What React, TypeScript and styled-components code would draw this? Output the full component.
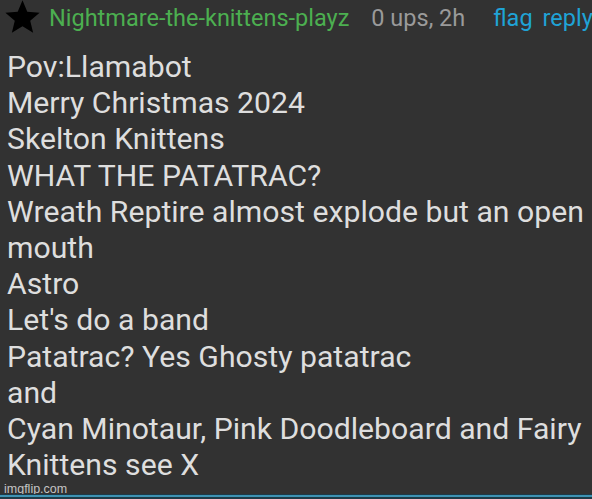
import React from "react";
import styled, { createGlobalStyle } from "styled-components";

const Global = createGlobalStyle`
  html, body { margin: 0; padding: 0; background: #323232; }
  body { width: 592px; height: 499px; overflow: hidden; }
`;

const Page = styled.div`
  position: relative;
  width: 592px;
  height: 499px;
  background: #323232;
  font-family: Roboto, "Liberation Sans", sans-serif;
  overflow: hidden;
  display: flex;
  flex-direction: column;
`;

const Header = styled.div`
  display: flex;
  align-items: center;
  height: 36px;
  padding-left: 4px;
  white-space: nowrap;
  font-size: 23.5px;
`;

const Star = styled.svg`
  width: 37px;
  height: 37px;
  margin-top: -4px;
  flex: none;
`;

const User = styled.span`
  color: #4caf50;
  margin-left: 8px;
`;

const Meta = styled.span`
  color: #9a9a9a;
  margin-left: 22px;
`;

const Link = styled.span<{ $gap: number }>`
  color: #1fa3d6;
  margin-left: ${(p) => p.$gap}px;
`;

const Body = styled.div`
  padding: 13px 0 0 7px;
  color: #dedede;
  font-size: 30.2px;
  line-height: 36.2px;
  white-space: pre;
`;

const Watermark = styled.span`
  position: absolute;
  left: 4px;
  bottom: 4px;
  font-family: "Liberation Sans", sans-serif;
  font-size: 12.5px;
  line-height: 12px;
  color: #c4c4c4;
`;

const BottomBar = styled.div`
  position: absolute;
  left: 0;
  right: 0;
  bottom: 0;
  height: 4px;
  background: #1e3b48;
  border-top: 1px solid #1e3a48;
  &::after {
    content: "";
    display: block;
    height: 2px;
    background: #3e93b3;
  }
`;

const lines = [
  "Pov:Llamabot",
  "Merry Christmas 2024",
  "Skelton Knittens",
  "WHAT THE PATATRAC?",
  "Wreath Reptire almost explode but an open",
  "mouth",
  "Astro",
  "Let's do a band",
  "Patatrac? Yes Ghosty patatrac",
  "and",
  "Cyan Minotaur, Pink Doodleboard and Fairy",
  "Knittens see X",
];

export default function App() {
  return (
    <Page>
      <Global />
      <Header>
        <Star viewBox="0 0 24 24">
          <path d="M12 1.5l3.1 7.4 8 .6-6.1 5.2 1.9 7.8L12 18.3l-6.9 4.2 1.9-7.8L.9 9.5l8-.6z" fill="#000" />
        </Star>
        <User>Nightmare-the-knittens-playz</User>
        <Meta>0 ups, 2h</Meta>
        <Link $gap={28}>flag</Link>
        <Link $gap={10}>reply</Link>
      </Header>
      <Body>{lines.join("\n")}</Body>
      <Watermark>imgflip.com</Watermark>
      <BottomBar />
    </Page>
  );
}
